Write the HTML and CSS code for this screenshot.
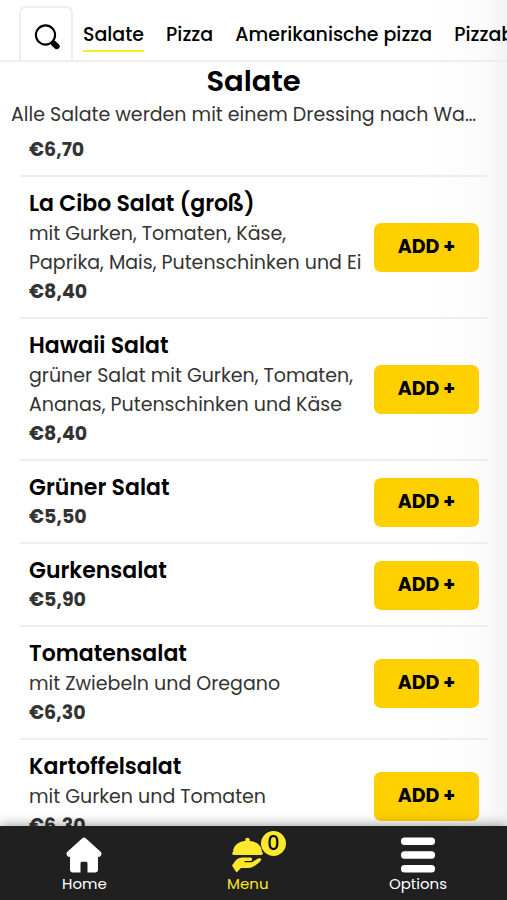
FILE: index.html
```html
<!DOCTYPE html>
<html lang="de">
<head>
<meta charset="utf-8">
<meta name="viewport" content="width=device-width, initial-scale=1">
<title>Salate</title>
<link rel="stylesheet" href="styles.css">
</head>
<body>
<header class="tabs">
  <button class="search" type="button" aria-label="Suche">
    <svg viewBox="0 0 26 26" width="26" height="26"><circle cx="11.500" cy="11" r="9.600" fill="none" stroke="#000" stroke-width="2.100"/><path d="M18 17.500l2 2" stroke="#000" stroke-width="3.400"/><path d="M19.800 19.600l3 2.700" stroke="#000" stroke-width="5.800" stroke-linecap="round"/></svg>
  </button>
  <nav class="categories">
    <a class="category active" href="#salate">Salate</a>
    <a class="category" href="#pizza">Pizza</a>
    <a class="category" href="#amerikanische">Amerikanische pizza</a>
    <a class="category" href="#pizzabrot">Pizzabrot</a>
  </nav>
</header>
<main class="content" id="salate">
  <h1 class="heading">Salate</h1>
  <p class="note">Alle Salate werden mit einem Dressing nach Wahl serviert</p>
  <ul class="items">
    <li class="item first"><div class="info"><p class="price">€6,70</p></div></li>
    <li class="item">
      <div class="info"><h2 class="name">La Cibo Salat (groß)</h2><p class="desc">mit Gurken, Tomaten, Käse,<br>Paprika, Mais, Putenschinken und Ei</p><p class="price">€8,40</p></div>
      <button class="add" type="button">ADD +</button>
    </li>
    <li class="item">
      <div class="info"><h2 class="name">Hawaii Salat</h2><p class="desc">grüner Salat mit Gurken, Tomaten,<br>Ananas, Putenschinken und Käse</p><p class="price">€8,40</p></div>
      <button class="add" type="button">ADD +</button>
    </li>
    <li class="item">
      <div class="info"><h2 class="name">Grüner Salat</h2><p class="price">€5,50</p></div>
      <button class="add" type="button">ADD +</button>
    </li>
    <li class="item">
      <div class="info"><h2 class="name">Gurkensalat</h2><p class="price">€5,90</p></div>
      <button class="add" type="button">ADD +</button>
    </li>
    <li class="item">
      <div class="info"><h2 class="name">Tomatensalat</h2><p class="desc">mit Zwiebeln und Oregano</p><p class="price">€6,30</p></div>
      <button class="add" type="button">ADD +</button>
    </li>
    <li class="item">
      <div class="info"><h2 class="name">Kartoffelsalat</h2><p class="desc">mit Gurken und Tomaten</p><p class="price">€6,30</p></div>
      <button class="add" type="button">ADD +</button>
    </li>
  </ul>
</main>
<nav class="bottom">
  <a class="link" href="#home">
    <svg viewBox="0 0 36 36" width="36" height="36"><path d="M16.300 1.200Q18-.2 19.700 1.200L34.600 14.800Q36.200 16.500 35 18.500Q34 20.200 32 19.800V32.500Q32 35.500 29 35.500H21.500V26.500Q21.500 24.800 20 24.800H16Q14.500 24.800 14.500 26.500V35.500H7Q4 35.500 4 32.500V19.800Q2 20.200 1 18.500Q-.2 16.500 1.400 14.800Z" fill="#fff"/></svg>
    <span>Home</span>
  </a>
  <a class="link current" href="#menu">
    <span class="dish">
      <svg viewBox="0 0 32 36" width="32" height="36"><path d="M1 15.500C1 8.500 6.500 4.500 13.300 4V2.500Q13.300.8 15.500.8T17.700 2.500V4C24.500 4.500 30 8.500 30 15.500ZM0 15.400H31Q31 18 29 18H2Q0 18 0 15.400Z" fill="#fde92b"/><path d="M0 28.500L4 23Q6.500 20.500 10 20.500H18.500Q20.500 21 20.200 22.500Q20 24 18 24H12.500V25.200H20L26 21.500Q29 20.500 29.300 22.500Q28.500 25.500 20.500 30Q18.500 31 16 31H9L4.500 35.500Z" fill="#fde92b"/></svg>
      <span class="badge">0</span>
    </span>
    <span>Menu</span>
  </a>
  <a class="link" href="#options">
    <svg viewBox="0 0 36 36" width="36" height="36"><g fill="#fff"><rect x="1" y="0.500" width="34" height="7.500" rx="3.500"/><rect x="1" y="14.200" width="34" height="7.500" rx="3.500"/><rect x="1" y="27.900" width="34" height="7.500" rx="3.500"/></g></svg>
    <span>Options</span>
  </a>
</nav>
</body>
</html>
```
FILE: styles.css
```css
* { box-sizing: border-box; }
body {
  margin: 0;
  height: 100vh;
  display: flex;
  flex-direction: column;
  overflow: hidden;
  font-family: Poppins, Inter, sans-serif;
  font-size: 19px;
  color: #333;
  background: linear-gradient(to left, #f3f3f3 0, #fbfbfb 24px, #fff 90px);
}
h1, h2, p, ul { margin: 0; padding: 0; }
a { text-decoration: none; color: inherit; }
button { font: inherit; color: #000; padding: 0; cursor: pointer; }
.tabs {
  display: flex;
  flex: none;
  height: 62px;
  padding: 6px 0 0 19px;
  border-bottom: 2px solid #eee;
}
.search {
  flex: none;
  width: 54px;
  padding: 6px 0 0 2px;
  border: 2px solid #eee;
  border-bottom: 0;
  border-radius: 7px 7px 0 0;
  background: #fff;
}
.search svg { display: block; margin: auto; }
.categories {
  display: flex;
  align-items: flex-start;
  gap: 22px;
  min-width: 0;
  overflow: hidden;
  padding: 14px 0 0 10px;
}
.category {
  flex: none;
  font-weight: 500;
  line-height: 30px;
  color: #000;
  border-bottom: 2px solid transparent;
}
.category.active { border-color: #fde92b; }
.content { flex: 1; min-height: 0; overflow: hidden; }
.heading {
  font-size: 29px;
  font-weight: 600;
  line-height: 38px;
  text-align: center;
  color: #000;
}
.note {
  line-height: 30px;
  padding: 0 24px 0 11px;
  white-space: nowrap;
  overflow: hidden;
  text-overflow: ellipsis;
}
.items { list-style: none; margin: 0 19px 0 20px; }
.item {
  display: flex;
  align-items: center;
  padding: 12px 9px 11px;
  border-bottom: 2px solid #eee;
}
.item.first { padding-top: 5px; }
.info { flex: 1; min-width: 0; white-space: nowrap; }
.name { font-size: 22px; font-weight: 600; line-height: 29px; color: #000; }
.desc { line-height: 29px; padding-top: 1px; }
.price { font-weight: 700; line-height: 29px; }
.add {
  flex: none;
  width: 105px;
  height: 49px;
  padding-bottom: 2px;
  border: 0;
  border-radius: 7px;
  background: #ffd000;
  font-weight: 700;
}
.bottom {
  flex: none;
  display: flex;
  justify-content: space-between;
  height: 74px;
  padding: 11px 60px 0 62px;
  background: #202020;
  color: #fff;
  box-shadow: 0 0 12px rgba(0, 0, 0, .45);
}
.link {
  display: flex;
  flex-direction: column;
  align-items: center;
  font-size: 15px;
  line-height: 22px;
}
.link svg { display: block; }
.current { color: #fde92b; }
.dish { position: relative; }
.badge {
  position: absolute;
  left: 29px;
  top: -6px;
  width: 25px;
  height: 25px;
  border-radius: 50%;
  background: #fde92b;
  color: #000;
  font-size: 19px;
  font-weight: 500;
  line-height: 25px;
  text-align: center;
}
```
